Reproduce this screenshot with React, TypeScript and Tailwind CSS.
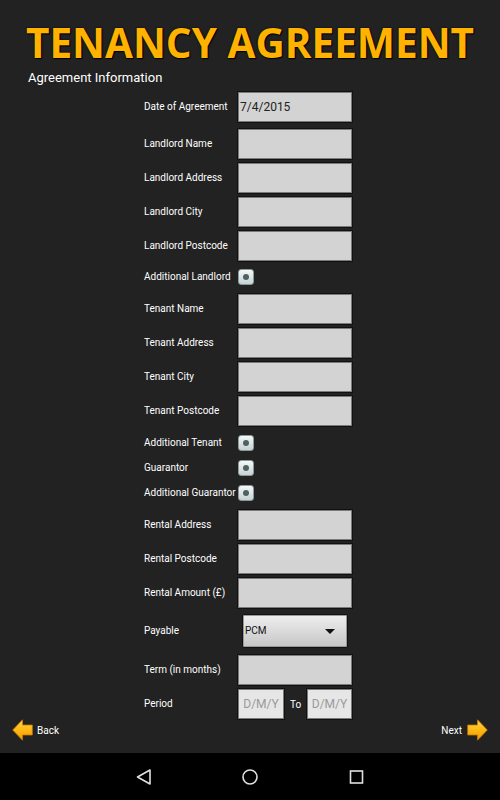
import React from "react";

const Box = ({ children }: { children?: React.ReactNode }) => (
  <div className="w-[114px] h-[30px] bg-[#d3d3d3] border border-[#7a7a7a] shadow-[0_0_0_1px_#111] flex items-center text-[12px] text-[#222] leading-none">
    {children}
  </div>
);

const Label = ({ children }: { children: React.ReactNode }) => (
  <div className="w-[94px] text-[10px] leading-[12px] text-white whitespace-nowrap">{children}</div>
);

const FieldRow = ({ label, children, mt }: { label: string; children?: React.ReactNode; mt: string }) => (
  <div className={`flex items-center ${mt}`}>
    <Label>{label}</Label>
    <Box>{children}</Box>
  </div>
);

const Check = () => (
  <div className="w-[16px] h-[16px] rounded-[3px] bg-gradient-to-b from-[#f4f8f8] to-[#c6d2d2] border border-[#8a9a9a] flex items-center justify-center">
    <div className="w-[6px] h-[6px] rounded-full bg-[#4d6263]" />
  </div>
);

const CheckRow = ({ label, mt }: { label: string; mt: string }) => (
  <div className={`flex items-center h-[25px] ${mt}`}>
    <Label>{label}</Label>
    <Check />
  </div>
);

const Arrow = ({ dir }: { dir: "left" | "right" }) => (
  <svg width="21" height="22" viewBox="0 0 21 22" className={dir === "right" ? "-scale-x-100" : ""}>
    <defs>
      <linearGradient id={`g-${dir}`} x1="0" y1="0" x2="0" y2="1">
        <stop offset="0" stopColor="#ffd84a" />
        <stop offset="0.55" stopColor="#ffb411" />
        <stop offset="1" stopColor="#f29a00" />
      </linearGradient>
    </defs>
    <path
      d="M0.7 11 L10.5 0.8 L10.5 6 L20.3 6 L20.3 16 L10.5 16 L10.5 21.2 Z"
      fill={`url(#g-${dir})`}
      stroke="#c57a00"
      strokeWidth="0.8"
      strokeLinejoin="round"
    />
  </svg>
);

export default function App() {
  return (
    <div className="w-[500px] h-[800px] bg-[#222222] flex flex-col font-['Roboto',sans-serif] overflow-hidden">
      <div className="pt-[22px] text-center text-[40.5px] leading-[42px] font-bold text-[#ffb300] font-['Open_Sans',sans-serif] [text-shadow:1px_1px_1px_#000,0_0_2px_#000] whitespace-nowrap">
        TENANCY AGREEMENT
      </div>
      <div className="mt-[6px] pl-[28px] text-[13px] leading-[15px] text-white">Agreement Information</div>

      <div className="mt-[7px] pl-[144px] flex flex-col">
        <FieldRow label="Date of Agreement" mt="">
          <span className="pl-[1px]">7/4/2015</span>
        </FieldRow>
        <FieldRow label="Landlord Name" mt="mt-[7px]" />
        <FieldRow label="Landlord Address" mt="mt-[4px]" />
        <FieldRow label="Landlord City" mt="mt-[4px]" />
        <FieldRow label="Landlord Postcode" mt="mt-[4px]" />
        <CheckRow label="Additional Landlord" mt="mt-[3px]" />
        <FieldRow label="Tenant Name" mt="mt-[5px]" />
        <FieldRow label="Tenant Address" mt="mt-[4px]" />
        <FieldRow label="Tenant City" mt="mt-[4px]" />
        <FieldRow label="Tenant Postcode" mt="mt-[4px]" />
        <CheckRow label="Additional Tenant" mt="mt-[4px]" />
        <CheckRow label="Guarantor" mt="" />
        <CheckRow label="Additional Guarantor" mt="" />
        <FieldRow label="Rental Address" mt="mt-[5px]" />
        <FieldRow label="Rental Postcode" mt="mt-[4px]" />
        <FieldRow label="Rental Amount (£)" mt="mt-[4px]" />
        <div className="flex items-center h-[38px] mt-[4px]">
          <Label>Payable</Label>
          <div className="ml-[4px] w-[106px] h-[34px] rounded-[2px] bg-gradient-to-b from-[#efefef] to-[#c6c6c6] border border-[#111] shadow-[inset_0_0_0_1px_#999] flex items-center justify-between pl-[2px] pr-[12px]">
            <span className="text-[10px] text-[#111] leading-none">PCM</span>
            <svg width="10" height="5" viewBox="0 0 10 5">
              <path d="M0 0 L10 0 L5 5 Z" fill="#111" />
            </svg>
          </div>
        </div>
        <FieldRow label="Term (in months)" mt="mt-[5px]" />
        <div className="flex items-center mt-[4px]">
          <Label>Period</Label>
          <div className="w-[46px] h-[30px] bg-[#e6e6e6] border border-[#7a7a7a] shadow-[0_0_0_1px_#111] flex items-center justify-center text-[12px] text-[#9a9a9a] leading-none">
            D/M/Y
          </div>
          <div className="w-[23px] text-center text-[10px] text-white">To</div>
          <div className="w-[45px] h-[30px] bg-[#e6e6e6] border border-[#7a7a7a] shadow-[0_0_0_1px_#111] flex items-center justify-center text-[12px] text-[#9a9a9a] leading-none">
            D/M/Y
          </div>
        </div>
      </div>

      <div className="h-[22px] flex items-center justify-between px-[12px]">
        <div className="flex items-center gap-[4px]">
          <Arrow dir="left" />
          <span className="text-[10px] text-white">Back</span>
        </div>
        <div className="flex items-center gap-[5px]">
          <span className="text-[10px] text-white">Next</span>
          <Arrow dir="right" />
        </div>
      </div>

      <div className="mt-auto h-[47px] bg-black flex items-center justify-center">
        <svg width="500" height="47" viewBox="0 0 500 47">
          <path d="M150 17 L150 31 L137.5 24 Z" fill="none" stroke="#e0e0e0" strokeWidth="1.6" strokeLinejoin="round" />
          <circle cx="250" cy="24" r="7" fill="none" stroke="#e0e0e0" strokeWidth="1.6" />
          <rect x="350.5" y="18" width="12" height="12" fill="none" stroke="#e0e0e0" strokeWidth="1.6" />
        </svg>
      </div>
    </div>
  );
}
